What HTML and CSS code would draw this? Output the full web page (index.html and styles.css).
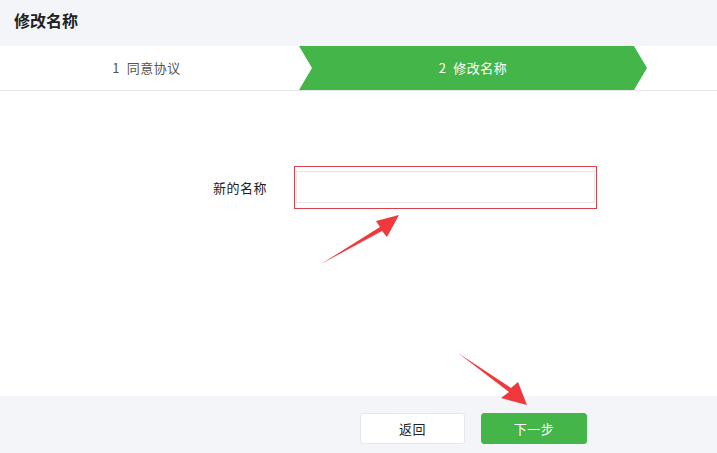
FILE: index.html
```html
<!DOCTYPE html>
<html lang="zh-CN">
<head>
<meta charset="utf-8">
<title>修改名称</title>
<link rel="stylesheet" href="styles.css">
</head>
<body>
<div class="page">
  <div class="header"><h1 class="title">修改名称</h1></div>
  <div class="steps">
    <div class="step step-done">1&nbsp; 同意协议</div>
    <div class="step step-current">2&nbsp; 修改名称</div>
  </div>
  <div class="main">
    <div class="form-row">
      <label class="label" for="name">新的名称</label>
      <div class="input-wrap">
        <input class="input" id="name" type="text">
        <span class="mark"></span>
      </div>
    </div>
  </div>
  <div class="footer">
    <button class="btn btn-default">返回</button>
    <button class="btn btn-primary">下一步</button>
  </div>
  <svg class="annot" width="717" height="453" viewBox="0 0 717 453">
    <polygon points="321,264 380,227 376,221 399,215 387,237 382,231" fill="#f0393c"/>
    <polygon points="458,353 511,388 518,382 527,405 501,398 509,392" fill="#f0393c"/>
  </svg>
</div>
</body>
</html>
```
FILE: styles.css
```css
* { box-sizing: border-box; }
html, body { margin: 0; padding: 0; background: #fff; }
body {
  font-family: "Noto Sans CJK SC", "Liberation Sans", sans-serif;
  font-size: 14px;
  color: #222;
}
.page {
  position: relative;
  width: 717px;
  height: 453px;
  overflow: hidden;
  display: flex;
  flex-direction: column;
}
.header {
  height: 46px;
  background: #f4f5f9;
  padding-left: 14px;
}
.title {
  margin: 0;
  font-size: 16px;
  font-weight: bold;
  line-height: 40px;
  color: #222;
}
.steps {
  height: 45px;
  display: flex;
  background: #fff;
  border-bottom: 1px solid #e7e7eb;
}
.step {
  height: 44px;
  line-height: 44px;
  text-align: center;
  font-size: 13px;
  letter-spacing: 0.5px;
}
.step-done {
  width: 293px;
  color: #555;
}
.step-current {
  width: 348px;
  margin-left: 6px;
  background: #44b549;
  color: #fff;
  clip-path: polygon(0 0, 335px 0, 348px 22px, 335px 44px, 0 44px, 13px 22px);
}
.main {
  flex: 1;
  background: #fff;
  padding-top: 80px;
}
.form-row {
  display: flex;
  align-items: center;
}
.label {
  width: 267px;
  text-align: right;
  font-size: 13px;
  letter-spacing: 0.5px;
  color: #222;
}
.input-wrap {
  position: relative;
  margin-left: 29px;
}
.input {
  display: block;
  width: 299px;
  height: 32px;
  border: 1px solid #e7e7eb;
  border-radius: 0;
  outline: none;
  padding: 0 8px;
  font: inherit;
}
.mark {
  position: absolute;
  left: -2px;
  right: -2px;
  top: -5px;
  bottom: -6px;
  border: 1px solid #d8434b;
}
.footer {
  height: 57px;
  background: #f4f5f9;
  display: flex;
  align-items: flex-start;
  gap: 16px;
  padding: 17px 0 0 360px;
}
.btn {
  height: 31px;
  border-radius: 3px;
  font-family: inherit;
  font-size: 13px;
  letter-spacing: 0.5px;
  cursor: pointer;
  padding: 0;
}
.btn-default {
  width: 105px;
  background: #fff;
  border: 1px solid #e4e8eb;
  color: #222;
}
.btn-primary {
  width: 106px;
  background: #44b549;
  border: 1px solid #44b549;
  color: #fff;
}
.annot {
  position: absolute;
  left: 0;
  top: 0;
  pointer-events: none;
}
```
